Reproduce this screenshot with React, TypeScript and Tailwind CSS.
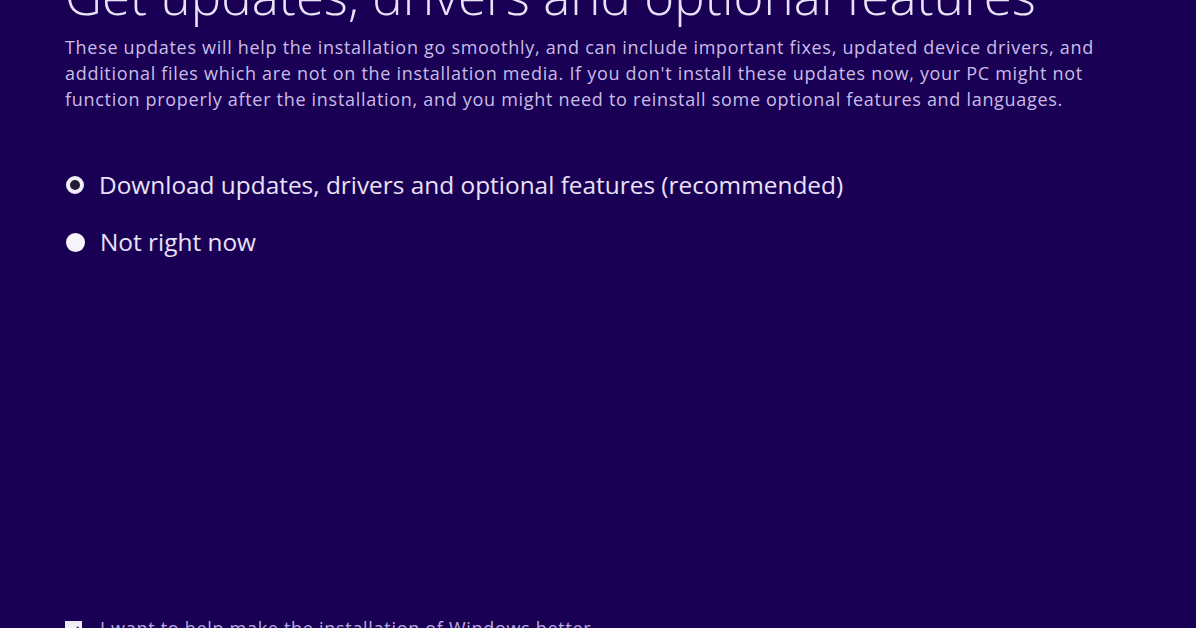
const App = () => {
  return (
    <div
      className="relative h-[628px] w-[1196px] overflow-hidden bg-[#1a0055] text-[#e8e2f6]"
      style={{ fontFamily: '"Open Sans", "Noto Sans", sans-serif' }}
    >
      <div className="flex h-full flex-col pl-[65px]">
        {/* Title, cut off at the top */}
        <h1 className="-mt-[33px] whitespace-nowrap text-[51px] font-light leading-[56px] tracking-[0.1px]">
          Get updates, drivers and optional features
        </h1>

        <p className="mt-[11px] whitespace-nowrap text-[18px] font-medium leading-[26px] tracking-[0.7px] text-[#c9bde6]">
          These updates will help the installation go smoothly, and can include important fixes, updated device drivers, and
          <br />
          additional files which are not on the installation media. If you don't install these updates now, your PC might not
          <br />
          function properly after the installation, and you might need to reinstall some optional features and languages.
        </p>

        <div className="mt-[58px] flex flex-col gap-[27px]">
          <label className="flex items-center gap-[15px]">
            <span className="ml-[1px] h-[18px] w-[18px] rounded-full border-[4px] border-[#f2eef9] bg-[#231a33]" />
            <span className="text-[24.4px] leading-[30px] tracking-[0px]">
              Download updates, drivers and optional features (recommended)
            </span>
          </label>
          <label className="flex items-center gap-[15px]">
            <span className="ml-[1px] h-[19px] w-[19px] rounded-full bg-[#f7f5fb]" />
            <span className="text-[24.4px] leading-[30px] tracking-[0px]">Not right now</span>
          </label>
        </div>

        <div className="mt-auto -mb-[13px] flex items-start gap-[18px]">
          <span className="mt-[6px] flex h-[17px] w-[17px] items-center justify-center bg-[#eeeaf6]">
            <svg viewBox="0 0 16 16" className="h-[14px] w-[14px]">
              <path d="M3 8.5l3 3 7-7" fill="none" stroke="#333" strokeWidth="2" />
            </svg>
          </span>
          <span className="whitespace-nowrap text-[18px] font-medium leading-[26px] tracking-[0.7px] text-[#b9abe0]">
            I want to help make the installation of Windows better
          </span>
        </div>
      </div>
    </div>
  );
};

export default App;
